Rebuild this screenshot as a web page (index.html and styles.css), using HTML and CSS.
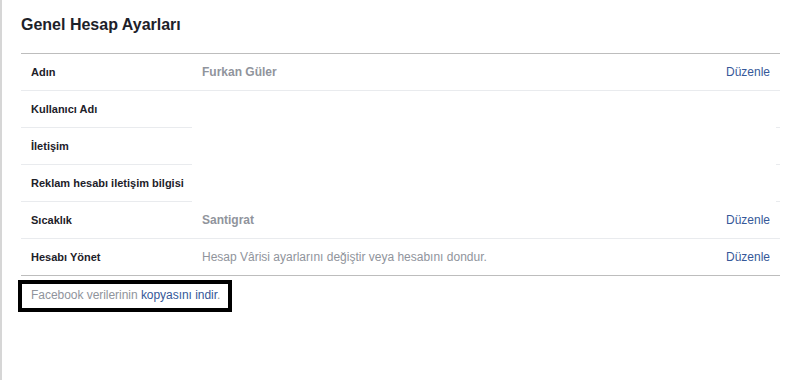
FILE: index.html
```html
<!DOCTYPE html>
<html lang="tr">
<head>
  <meta charset="UTF-8" />
  <meta name="viewport" content="width=device-width, initial-scale=1.0"/>
  <title>Genel Hesap Ayarları</title>
  <link rel="stylesheet" href="styles.css">
</head>
<body>
  <div class="page">
    <h2 class="title">Genel Hesap Ayarları</h2>
    <div class="settings">
      <div class="row">
        <div class="label">Adın</div>
        <div class="value strong">Furkan Güler</div>
        <a class="edit" href="#">Düzenle</a>
      </div>
      <div class="row empty">
        <div class="label">Kullanıcı Adı</div>
        <div class="value"></div>
        <div class="edit"></div>
      </div>
      <div class="row empty">
        <div class="label">İletişim</div>
        <div class="value"></div>
        <div class="edit"></div>
      </div>
      <div class="row empty">
        <div class="label">Reklam hesabı iletişim bilgisi</div>
        <div class="value"></div>
        <div class="edit"></div>
      </div>
      <div class="row">
        <div class="label">Sıcaklık</div>
        <div class="value strong">Santigrat</div>
        <a class="edit" href="#">Düzenle</a>
      </div>
      <div class="row last">
        <div class="label">Hesabı Yönet</div>
        <div class="value">Hesap Vârisi ayarlarını değiştir veya hesabını dondur.</div>
        <a class="edit" href="#">Düzenle</a>
      </div>
    </div>
    <div class="download">
      <span class="download-box">Facebook verilerinin <a href="#">kopyasını indir</a>.</span>
    </div>
  </div>
</body>
</html>
```

FILE: styles.css
```css
html, body {
  margin: 0;
  padding: 0;
  background: #fff;
  height: 100%;
}
body {
  font-family: "Liberation Sans", Arial, Helvetica, sans-serif;
  font-size: 12px;
  color: #1d2129;
}
.page {
  box-sizing: border-box;
  min-height: 100%;
  border-left: 2px solid #d6d6d6;
  padding: 15px 6px 0 19px;
}
.title {
  margin: 0 0 18px;
  font-size: 16px;
  line-height: 20px;
  font-weight: bold;
  color: #1d2129;
}
.settings {
  border-top: 1px solid #bdbdbd;
  border-bottom: 1px solid #bdbdbd;
}
.row {
  display: flex;
  line-height: 16px;
}
.row > * {
  padding: 10px 0;
  border-bottom: 1px solid #e9ebee;
}
.row.last > * {
  border-bottom: none;
}
.label {
  width: 161px;
  flex-shrink: 0;
  padding-left: 10px !important;
  font-size: 11px;
  font-weight: bold;
  white-space: nowrap;
  color: #1d2129;
}
.value {
  flex: 1;
  padding-left: 10px !important;
  color: #90949c;
}
.value.strong {
  font-weight: bold;
}
.edit {
  padding-right: 10px !important;
  color: #365899;
  text-decoration: none;
}
.row.empty .value {
  border-bottom-color: transparent;
}
.row.empty .edit {
  width: 4px;
  padding-right: 0 !important;
}
.download {
  padding-top: 4px;
}
.download-box {
  display: inline-block;
  margin-left: -3px;
  padding: 3px 8px 5px 9px;
  border: 4px solid #000;
  line-height: 16px;
  letter-spacing: -0.04px;
  color: #90949c;
}
.download-box a {
  color: #365899;
  text-decoration: none;
}
```
